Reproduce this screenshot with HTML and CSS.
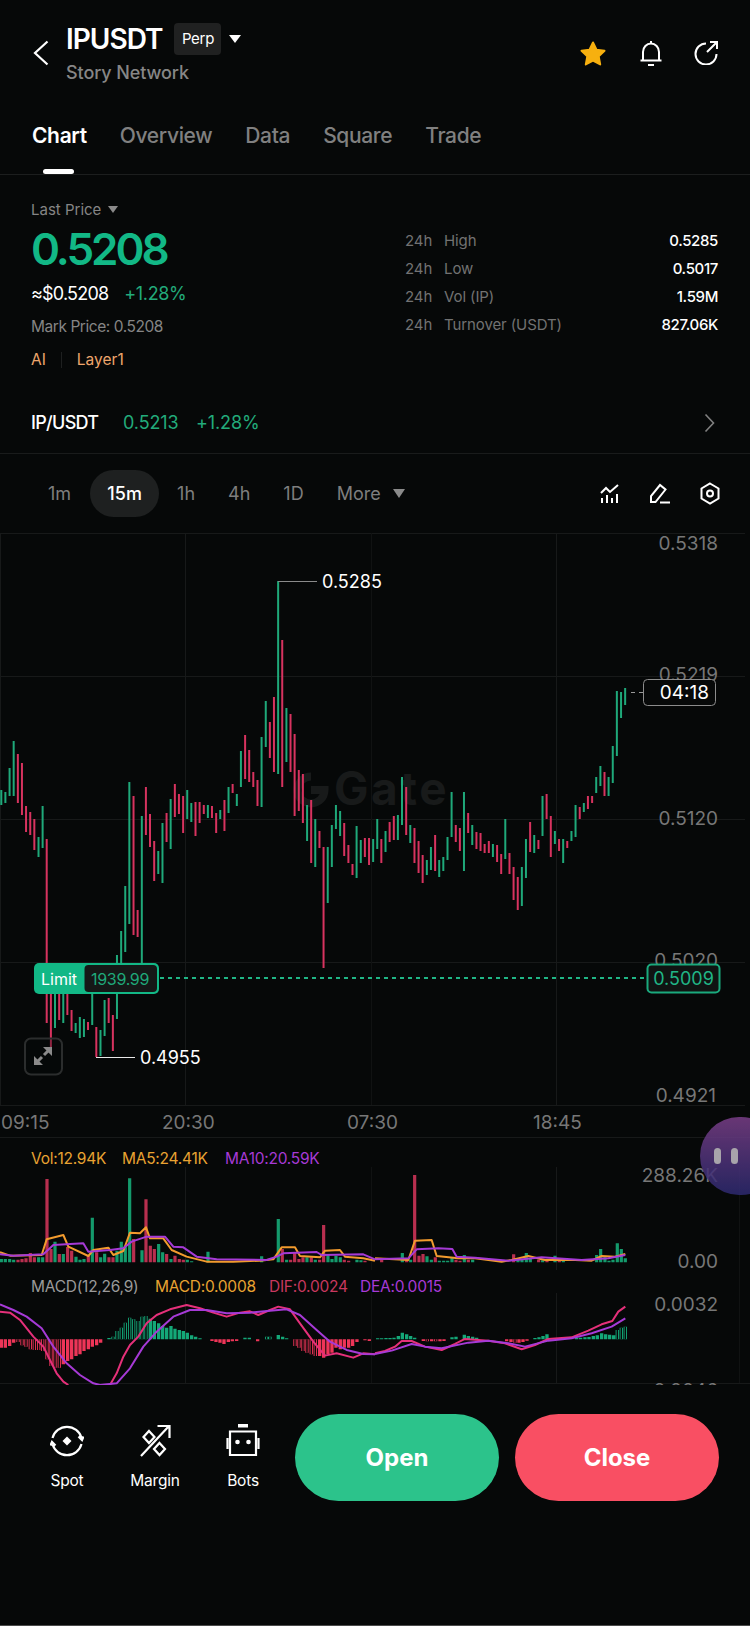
FILE: index.html
```html
<!DOCTYPE html>
<html lang="en">
<head>
<meta charset="utf-8">
<title>IPUSDT Perp</title>
<link rel="stylesheet" href="styles.css">
</head>
<body>
<main class="app">
  <header class="top">
    <svg class="back" width="16" height="26" viewBox="0 0 16 26"><path d="M14.500 1.500 2 13l12.500 11.500"/></svg>
    <div class="title">
      <div class="title-row">
        <span class="symbol">IPUSDT</span>
        <span class="badge">Perp</span>
        <span class="tri tri-white"></span>
      </div>
      <div class="subtitle">Story Network</div>
    </div>
    <div class="top-icons">
      <svg class="star" width="28" height="27" viewBox="0 0 28 27"><path d="M14 2.500 17.500 9.800 25.500 10.800 19.700 16.400 21.200 24.400 14 20.500 6.800 24.400 8.300 16.400 2.500 10.800 10.500 9.800Z"/></svg>
      <svg class="line-icon" width="24" height="27" viewBox="0 0 24 27"><path d="M12 1v3M4 20.500V12a8 8.500 0 0 1 16 0v8.500M1.500 20.500h21M9 25h6"/></svg>
      <svg class="line-icon" width="25" height="25" viewBox="0 0 25 25"><path d="M12 3.500A10.500 10.500 0 1 0 22.500 14M13 12 23 2M16 2h7v7"/></svg>
    </div>
  </header>

  <nav class="tabs">
    <span class="tab tab-on">Chart</span>
    <span class="tab">Overview</span>
    <span class="tab">Data</span>
    <span class="tab">Square</span>
    <span class="tab">Trade</span>
  </nav>

  <section class="stats">
    <div class="price-col">
      <div class="last">Last Price <span class="tri tri-gray"></span></div>
      <div class="price">0.5208</div>
      <div class="fiat"><span>≈$0.5208</span><span class="up">+1.28%</span></div>
      <div class="mark">Mark Price: 0.5208</div>
      <div class="tags"><span>AI</span><i class="tag-sep"></i><span>Layer1</span></div>
    </div>
    <div class="day-col">
      <div class="day-row"><span class="day-24">24h</span><span>High</span><b>0.5285</b></div>
      <div class="day-row"><span class="day-24">24h</span><span>Low</span><b>0.5017</b></div>
      <div class="day-row"><span class="day-24">24h</span><span>Vol (IP)</span><b>1.59M</b></div>
      <div class="day-row"><span class="day-24">24h</span><span>Turnover (USDT)</span><b>827.06K</b></div>
    </div>
  </section>

  <section class="pair">
    <span class="pair-name">IP/USDT</span>
    <span class="pair-val">0.5213</span>
    <span class="pair-val">+1.28%</span>
    <svg class="pair-go" width="11" height="20" viewBox="0 0 11 20"><path d="M1.500 1.500 9.500 10l-8 8.500"/></svg>
  </section>

  <section class="frames">
    <span class="tf">1m</span>
    <span class="tf tf-on">15m</span>
    <span class="tf">1h</span>
    <span class="tf">4h</span>
    <span class="tf">1D</span>
    <span class="tf tf-more">More <span class="tri tri-gray2"></span></span>
    <div class="tools">
      <svg class="tool" width="20" height="20" viewBox="0 0 20 20"><path d="M1 9 6 4l4 4 8-7M2 14v5M7 11v8M12 14v5M17 10v9"/></svg>
      <svg class="tool" width="22" height="21" viewBox="0 0 22 21"><path d="M2 19v-6L11 2l5.500 4.500L6.500 19ZM11 19.500h10"/></svg>
      <svg class="tool" width="20" height="23" viewBox="0 0 20 23"><path d="M10 1.500 18.500 6.500v10L10 21.500 1.500 16.500v-10Z"/><circle cx="10" cy="11.500" r="3"/></svg>
    </div>
  </section>

  <svg class="chart" width="750" height="852" viewBox="0 533 750 852">
    <path class="grid" d="M0 533.500H745M0 676.500H745M0 819.500H745M0 962.500H745M0 1105.500H745M0 1137.500H750M0 1383.500H750M185.500 533V1105M556.500 533V1105M.5 533V1105M185.500 1167V1270M556.500 1167V1270M185.500 1293V1383M556.500 1293V1383"/>
    <path class="grid-dim" d="M371.500 533V1105M371.500 1167V1270M371.500 1293V1383M739.500 1167V1383"/>

    <g class="mark-gate">
      <path class="gate-logo" d="M311 776.500a13.500 13.500 0 1 0 13.500 13.500h-13.500"/>
      <text class="gate-word" x="334" y="805">Gate</text>
    </g>

    <g transform="scale(.998 1)">
      <path class="cg" d="M1.300 790V805M5.400 792V803M9.600 768V796M13.700 741V796M38.600 837V857M42.700 806V848M55.100 990V1028M63.400 990V1023M75.800 1023V1033M80 1017V1038M84.100 1019V1037M92.400 990V1025M100.700 1030V1056M104.800 1000V1036M117.200 955V1019M121.400 931V963M125.500 886V952M129.600 782V924M142.100 816V963M158.600 851V874M162.800 823V883M171 799V849M187.600 790V819M191.700 803V822M208.300 805V818M220.700 810V819M229 787V813M237.300 794V806M241.400 751V787M262.100 737V807M266.300 701V747M278.700 581V774M287 708V762M307.700 805V841M315.900 819V867M328.400 847V903M332.500 825V867M336.600 805V829M340.800 811V836M357.300 826V878M361.500 840V863M373.900 839V862M378 819V849M386.300 831V852M398.700 815V840M402.800 777V825M411.100 825V843M427.700 860V875M431.800 847V870M440.100 860V877M444.200 857V871M448.400 837V860M452.500 792V837M464.900 792V871M473.200 825V845M493.900 844V857M506.300 819V859M522.900 867V906M527 839V878M535.300 835V853M543.600 796V836M556 831V844M564.300 839V863M572.600 831V841M576.700 805V837M585 803V812M597.400 777V793M601.600 766V786M609.800 777V796M614 746V783M618.100 691V756M622.300 692V718M626.400 688V705"/>
      <path class="cr" d="M17.900 754V803M22 763V815M26.100 806V832M30.300 812V835M34.400 819V850M46.800 839V1023M51 990V1047M59.300 990V1020M67.500 990V1015M71.700 1010V1031M88.200 1022V1030M96.500 1027V1057M108.900 998V1023M113.100 1015V1051M133.800 796V935M137.900 910V937M146.200 787V835M150.300 814V847M154.500 841V881M166.900 813V842M175.200 784V817M179.300 794V814M183.500 796V833M195.900 802V836M200 802V823M204.200 805V814M212.400 806V818M216.600 813V833M224.900 800V831M233.100 784V793M245.600 735V779M249.700 750V782M253.800 772V787M258 780V806M270.400 722V758M274.500 697V772M282.800 640V787M291.100 714V772M295.200 734V816M299.400 770V811M303.500 774V823M311.800 800V863M320.100 831V848M324.200 847V968M344.900 823V856M349.100 845V863M353.200 864V875M365.600 838V857M369.800 838V865M382.100 839V863M390.400 822V842M394.600 816V840M407 787V835M415.300 828V863M419.400 841V873M423.500 855V883M436 835V871M456.700 825V842M460.800 828V851M469.100 813V833M477.400 832V849M481.500 833V851M485.600 844V853M489.800 841V853M498.100 845V862M502.200 854V874M510.500 853V874M514.600 867V900M518.800 877V910M531.200 822V852M539.500 840V849M547.700 794V819M551.900 816V857M560.200 839V851M568.400 841V848M580.900 807V819M589.100 796V809M593.300 796V803M605.700 772V796"/>
    </g>

    <path class="hi-line" d="M278 581.500H317"/>
    <text class="extreme" x="322" y="588">0.5285</text>
    <path class="lo-line" d="M96 1057.500H135"/>
    <text class="extreme" x="140" y="1064">0.4955</text>

    <text class="axis" x="718" y="550" text-anchor="end">0.5318</text>
    <text class="axis" x="718" y="681" text-anchor="end">0.5219</text>
    <text class="axis" x="718" y="825" text-anchor="end">0.5120</text>
    <text class="axis" x="718" y="967" text-anchor="end">0.5020</text>
    <text class="axis" x="716" y="1102" text-anchor="end">0.4921</text>

    <path class="dash-white" d="M631 692.500H644"/>
    <rect class="clock-box" x="643.500" y="679.500" width="72" height="26" rx="4"/>
    <text class="clock" x="709" y="699" text-anchor="end">04:18</text>

    <path class="dash-green" d="M160 978H647"/>
    <rect class="limit-box" x="34" y="963" width="125" height="31" rx="5"/>
    <rect class="limit-qty" x="84.500" y="965" width="72.500" height="27" rx="4"/>
    <text class="limit-word" x="41" y="985">Limit</text>
    <text class="limit-num" x="91" y="985">1939.99</text>
    <rect class="order-box" x="647.500" y="964.500" width="72" height="28" rx="4"/>
    <text class="order-num" x="683.500" y="985" text-anchor="middle">0.5009</text>

    <rect class="expand" x="25" y="1038.500" width="37" height="36" rx="6"/>
    <path class="expand-arrow" d="M34 1065v-9l9 9ZM52 1047v9l-9-9Z"/>
    <path class="expand-stem" d="M38 1061l4-4M48 1051l-4 4"/>

    <text class="axis" x="1" y="1129">09:15</text>
    <text class="axis" x="162" y="1129">20:30</text>
    <text class="axis" x="347" y="1129">07:30</text>
    <text class="axis" x="533" y="1129">18:45</text>

    <text class="legend" y="1164"><tspan class="l-or" x="31">Vol:12.94K</tspan><tspan class="l-or" x="122">MA5:24.41K</tspan><tspan class="l-pu" x="225">MA10:20.59K</tspan></text>
    <text class="axis" x="718" y="1182" text-anchor="end">288.26K</text>
    <text class="axis" x="718" y="1268" text-anchor="end">0.00</text>

    <g transform="translate(0 1120) scale(.3333)">
      <path class="vg" d="M4 427v-10M16 427v-10M29 427v-10M41 427v-8M116 427v-15M128 427v-15M165 427v-62M190 427v-25M228 427v-17M240 427v-8M252 427v-10M277 427v-134M302 427v-15M314 427v-26M351 427v-35M364 427v-62M376 427v-50M389 427v-252M426 427v-36M476 427v-55M488 427v-30M513 427v-10M562 427v-8M575 427v-3M624 427v-32M785 427v-18M835 427v-130M860 427v-8M921 427v-15M946 427v-8M984 427v-25M996 427v-10M1008 427v-20M1021 427v-15M1071 427v-8M1083 427v-6"/>
      <path class="vr" d="M54 427v-8M66 427v-10M78 427v-12M91 427v-28M103 427v-15M141 427v-250M153 427v-40M178 427v-25M203 427v-46M215 427v-35M265 427v-20M290 427v-30M327 427v-15M339 427v-15M401 427v-70M438 427v-189M451 427v-50M463 427v-40M500 427v-25M525 427v-20M538 427v-10M550 427v-8M847 427v-40M872 427v-8M884 427v-30M897 427v-10M909 427v-15M934 427v-15M959 427v-8M971 427v-112M1033 427v-8M1046 427v-5M1095 427v-5"/>
      <path class="ma-or" d="M0 397 30 407 125 405 140 358 190 345 205 380 265 408 280 390 325 383 340 405 370 393 390 338 420 340 438 322 450 355 490 355 515 390 560 410 620 425 700 425 780 422 820 418 845 382 885 382 900 408 960 412 975 392 1020 390 1035 410 1090 415 1125 422"/>
      <path class="ma-pu" d="M0 403 40 407 130 403 160 375 250 370 265 395 330 390 370 385 395 365 440 350 495 350 520 380 550 382 590 410 650 418 800 420 830 410 850 400 950 396 965 405 1090 403 1125 418"/>
    </g>
    <g transform="translate(375 1120) scale(.3333)">
      <path class="vg" d="M82 427v-28M107 427v-8M156 427v-18M169 427v-8M193 427v-5M206 427v-5M218 427v-5M231 427v-15M268 427v-22M293 427v-8M429 427v-8M441 427v-8M454 427v-28M466 427v-10M503 427v-6M540 427v-20M565 427v-8M665 427v-22M677 427v-40M690 427v-15M702 427v-5M714 427v-8M727 427v-57M739 427v-40M751 427v-12"/>
      <path class="vr" d="M20 427v-10M95 427v-8M119 427v-262M132 427v-20M144 427v-25M181 427v-15M243 427v-8M255 427v-5M280 427v-8M416 427v-24M491 427v-8M516 427v-5M553 427v-6"/>
      <path class="ma-or" d="M0 415 100 420 120 362 170 360 185 408 250 415 300 415 380 425 410 420 460 408 510 420 600 420 650 422 680 408 720 410 751 402"/>
      <path class="ma-pu" d="M0 418 100 415 125 388 190 385 232 387 245 410 300 413 400 422 500 412 620 420 700 415 751 405"/>
    </g>

    <text class="legend" y="1292"><tspan class="l-gr" x="31">MACD(12,26,9)</tspan><tspan class="l-or" x="155">MACD:0.0008</tspan><tspan class="l-re" x="269">DIF:0.0024</tspan><tspan class="l-pu" x="360">DEA:0.0015</tspan></text>
    <text class="axis" x="718" y="1311" text-anchor="end">0.0032</text>
    <text class="axis" x="718" y="1397" text-anchor="end">-0.0046</text>

    <g transform="translate(0 1120) scale(.3333)">
      <path class="mr" d="M4 658v25M16 658v25M29 658v20M41 658v10M190 658v75M203 658v65M215 658v60M228 658v50M240 658v45M252 658v35M265 658v30M277 658v22M290 658v18M302 658v10M959 658v50M971 658v55M984 658v45M996 658v40"/>
      <path class="mr" d="M54 658v8M66 658v18M78 658v22M91 658v30M103 658v32M116 658v32M128 658v35M141 658v60M153 658v80M165 658v85M178 658v85M885 658v20M897 658v25M909 658v35M921 658v40M934 658v45M946 658v50M1008 658v25M1021 658v30M1033 658v25M1046 658v25M1058 658v20M1071 658v8M1095 658v3M1108 658v5M636 658v5M648 658v8M660 658v10M672 658v14M685 658v8M697 658v6M710 658v5M773 658v6"/>
      <path class="mh" d="M54 658v8M66 658v18M78 658v22M91 658v30M103 658v32M116 658v32M128 658v35M141 658v60M153 658v80M165 658v85M178 658v85M885 658v20M897 658v25M909 658v35M921 658v40M934 658v45M946 658v50"/>
      <path class="mg" d="M451 658v-62M463 658v-55M476 658v-48M488 658v-40M500 658v-35M513 658v-40M525 658v-32M538 658v-28M550 658v-25M562 658v-20M575 658v-12M587 658v-8M600 658v-3M735 658v-5M748 658v-5M835 658v-13M848 658v-8M860 658v-3"/>
      <path class="mg" d="M327 658v-4M339 658v-8M351 658v-25M364 658v-35M376 658v-50M389 658v-65M401 658v-60M414 658v-55M426 658v-68M438 658v-70M800 658v-8M810 658v-8"/>
      <path class="mh" d="M339 658v-8M351 658v-25M364 658v-35M376 658v-50M389 658v-65M401 658v-60M414 658v-55M426 658v-68M438 658v-70M800 658v-8M810 658v-8"/>
      <path class="dif" d="M0 575 30 578 60 600 100 650 130 680 150 720 170 760 190 785 205 795M330 795 350 760 370 710 390 675 415 650 440 610 470 585 510 568 560 555 600 565 640 578 680 590 720 578 750 574 775 585 810 570 835 560 870 568 900 610 940 665 975 707 1010 700 1060 713 1090 700 1125 703"/>
      <path class="dea" d="M0 553 40 570 80 590 125 625 160 680 200 730 240 765 280 790 300 795 350 790 390 745 430 680 470 635 520 590 570 570 620 570 680 580 750 578 810 572 860 568 900 585 950 630 990 665 1040 690 1090 702 1125 703"/>
    </g>
    <g transform="translate(375 1120) scale(.3333)">
      <path class="mg" d="M8 658v-3M20 658v-3M33 658v-4M45 658v-4M57 658v-5M70 658v-10M82 658v-20M95 658v-15M107 658v-10M119 658v-5M231 658v-6M243 658v-8M268 658v-14M280 658v-10M293 658v-8M305 658v-5M480 658v-4M492 658v-6M504 658v-10M516 658v-15M605 658v-4M617 658v-5M630 658v-6M642 658v-7M655 658v-10M667 658v-12M680 658v-18M692 658v-15M704 658v-14M716 658v-12M727 658v-28M739 658v-35M751 658v-38"/>
      <path class="mr" d="M145 658v5M157 658v6M170 658v6M182 658v6M195 658v6M207 658v5M395 658v6M408 658v8M420 658v10M432 658v10M444 658v8M456 658v4"/>
      <path class="mh" d="M727 658v-28M739 658v-35M751 658v-38M157 658v6M182 658v6M420 658v10"/>
      <path class="dif" d="M0 700 30 693 60 680 80 663 110 663 150 680 200 690 240 672 270 657 340 662 390 670 440 688 480 675 520 657 590 652 640 632 680 613 712 603 730 575 751 560"/>
      <path class="dea" d="M0 702 50 692 110 672 150 680 200 685 280 668 340 662 400 670 450 680 520 662 590 655 650 640 710 620 751 595"/>
    </g>
  </svg>

  <div class="blob"><i class="eye"></i><i class="eye"></i></div>

  <footer class="actions">
    <div class="act">
      <svg class="act-icon" width="34" height="36" viewBox="0 0 34 36"><path d="M2.500 15A15 15 0 0 1 31.500 15M31.500 21A15 15 0 0 1 2.500 21M28.500 13.500l3.500 3.500 1.500-3.500M5.500 22.500 2 19 .5 22.500"/><path class="fill" d="m17 13.500 4.500 4.500-4.500 4.500-4.500-4.500Z"/></svg>
      <span>Spot</span>
    </div>
    <div class="act">
      <svg class="act-icon" width="32" height="36" viewBox="0 0 32 36"><path d="M2 33 30 3M18.500 3H30.500V15M10 8l5.500 6-5.500 6-5.500-6ZM20.500 20l5.500 6-5.500 6-5.500-6Z"/></svg>
      <span>Margin</span>
    </div>
    <div class="act">
      <svg class="act-icon" width="34" height="36" viewBox="0 0 34 36"><path d="M4 8.500H30V32H4ZM1.500 15V26M32.500 15V26"/><path class="fill" d="M12 1h10v3.500H12Z"/><circle class="fill" cx="11.500" cy="19" r="2.300"/><circle class="fill" cx="22.500" cy="19" r="2.300"/></svg>
      <span>Bots</span>
    </div>
    <button class="btn btn-open">Open</button>
    <button class="btn btn-close">Close</button>
  </footer>
</main>
</body>
</html>
```

FILE: styles.css
```css
* { box-sizing: border-box; }
html, body { margin: 0; padding: 0; background: #060808; }
body { width: 750px; height: 1626px; overflow: hidden; font-family: Inter, "Liberation Sans", sans-serif; color: #fff; }
.app { position: relative; width: 750px; height: 1626px; display: flex; flex-direction: column; background: #060808; }

.top { height: 110px; display: flex; align-items: flex-start; padding-left: 33px; }
.back { margin-top: 40px; fill: none; stroke: #fff; stroke-width: 2.200; flex: none; }
.title { margin-left: 17px; padding-top: 21px; }
.title-row { display: flex; align-items: center; height: 36px; }
.symbol { font-size: 28px; font-weight: 600; letter-spacing: -1px; line-height: 36px; }
.badge { margin-left: 12px; width: 47px; height: 32px; background: #202121; border-radius: 4px; font-size: 15px; line-height: 32px; text-align: center; letter-spacing: -.3px; }
.tri { display: inline-block; width: 0; height: 0; border-style: solid; border-color: transparent; border-bottom-width: 0; }
.tri-white { margin-left: 8px; border-width: 8px 6px 0; border-top-color: #fff; }
.tri-gray { margin-left: 2px; border-width: 7px 5px 0; border-top-color: #8a8a8a; vertical-align: 2px; }
.tri-gray2 { margin-left: 7px; border-width: 9px 6.500px 0; border-top-color: #8a8a8a; vertical-align: 2px; }
.subtitle { margin-top: 5px; font-size: 18px; line-height: 22px; color: #868686; font-weight: 500; letter-spacing: -.1px; }
.top-icons { margin-left: auto; margin-right: 31px; padding-top: 40px; display: flex; gap: 31px; align-items: flex-start; }
.star { fill: #f7b00f; stroke: #f7b00f; stroke-width: 2; stroke-linejoin: round; margin-right: 1px; }
.line-icon { fill: none; stroke: #fff; stroke-width: 2; }

.tabs { height: 65px; display: flex; gap: 33px; padding: 13px 0 0 32px; border-bottom: 1px solid #1c1e1e; }
.tab { font-size: 21px; font-weight: 500; line-height: 26px; color: #808080; letter-spacing: -.35px; }
.tab-on { color: #fff; font-weight: 600; position: relative; }
.tab-on::after { content: ""; position: absolute; left: 11px; top: 46px; width: 31px; height: 5px; border-radius: 3px; background: #fff; }

.stats { height: 217px; display: flex; }
.price-col { width: 405px; padding: 25px 0 0 31px; }
.last { font-size: 15px; line-height: 20px; color: #858585; }
.price { margin-top: 4px; font-size: 44px; line-height: 50px; font-weight: 600; color: #12b886; letter-spacing: -3px; }
.fiat { margin-top: 8px; display: flex; gap: 16px; font-size: 18px; line-height: 24px; letter-spacing: -.8px; }
.up { color: #22ab7b; letter-spacing: -.35px; }
.mark { margin-top: 11px; font-size: 15.500px; line-height: 20px; color: #858585; letter-spacing: -.45px; }
.tags { margin-top: 13px; display: flex; align-items: center; font-size: 15.500px; line-height: 20px; color: #eea66c; }
.tag-sep { width: 1px; height: 16px; margin: 0 15px; background: #1e2020; }
.day-col { flex: 1; padding: 51px 32px 0 0; }
.day-row { display: flex; height: 28px; align-items: center; font-size: 15px; color: #727272; letter-spacing: -.1px; }
.day-24 { width: 39px; }
.day-row b { margin-left: auto; color: #fff; font-weight: 500; letter-spacing: -.35px; }

.pair { height: 62px; display: flex; align-items: center; padding: 0 35px 0 31px; border-bottom: 1px solid #191b1b; font-size: 18px; }
.pair-name { width: 92px; letter-spacing: -.7px; font-weight: 500; }
.pair-val { color: #22ab7b; width: 73px; letter-spacing: -.1px; }
.pair-go { margin-left: auto; fill: none; stroke: #808080; stroke-width: 1.600; }

.frames { height: 79px; display: flex; align-items: center; gap: 33px; padding: 0 30px 0 48px; font-size: 18px; color: #7e7e7e; }
.tf { line-height: 47px; }
.tf-on { margin: 0 -15px 0 -14px; width: 69px; height: 47px; text-align: center; border-radius: 24px; background: #1e2020; color: #fff; font-weight: 500; }
.tools { margin-left: auto; display: flex; gap: 29px; align-items: center; }
.tool { fill: none; stroke: #fff; stroke-width: 2; }

.chart { display: block; flex: none; font-family: Inter, "Liberation Sans", sans-serif; }
.grid { stroke: #171919; stroke-width: 1; fill: none; }
.grid-dim { stroke: #101212; stroke-width: 1; fill: none; }
.gate-logo { fill: none; stroke: #181a1a; stroke-width: 8; }
.gate-word { fill: #181a1a; font-size: 46px; font-weight: 700; letter-spacing: 2.500px; }
.cg { stroke: #1fa97a; stroke-width: 2; fill: none; }
.cr { stroke: #d7335f; stroke-width: 2; fill: none; }
.hi-line { stroke: #8a8a8a; stroke-width: 1; }
.lo-line { stroke: #e8e8e8; stroke-width: 1; }
.extreme { fill: #fff; font-size: 18px; }
.axis { fill: #777; font-size: 19px; }
.dash-white { stroke: #999; stroke-dasharray: 4 4; stroke-width: 1; }
.clock-box { fill: #070909; stroke: #8c8c8c; stroke-width: 1; }
.clock { fill: #fff; font-size: 19px; }
.dash-green { stroke: #1fb585; stroke-width: 2; stroke-dasharray: 4 4; }
.limit-box { fill: #12b886; }
.limit-qty { fill: #151817; }
.limit-word { fill: #fff; font-size: 16px; }
.limit-num { fill: #1fa97a; font-size: 16px; letter-spacing: -.3px; }
.order-box { fill: #101413; stroke: #1aa97d; stroke-width: 2; }
.order-num { fill: #20b586; font-size: 18px; }
.expand { fill: rgba(6, 8, 8, .35); stroke: #2b2d2d; stroke-width: 2; }
.expand-arrow { fill: #8a8a8a; }
.expand-stem { stroke: #8a8a8a; stroke-width: 3; fill: none; }
.legend { font-size: 15.500px; letter-spacing: -.25px; }
.l-or { fill: #e9a332; }
.l-pu { fill: #a63ad6; }
.l-re { fill: #c8385f; }
.l-gr { fill: #9a9a9a; }
.vg { stroke: #149a6c; stroke-width: 9.600; fill: none; }
.vr { stroke: #b82f4f; stroke-width: 9.600; fill: none; }
.ma-or { stroke: #f29b2e; stroke-width: 6; fill: none; stroke-linejoin: round; }
.ma-pu { stroke: #a63ad6; stroke-width: 6; fill: none; stroke-linejoin: round; }
.mr { stroke: #ee3558; stroke-width: 10; fill: none; }
.mg { stroke: #14a878; stroke-width: 10; fill: none; }
.mh { stroke: #060808; stroke-width: 4.500; fill: none; }
.dif { stroke: #e5307a; stroke-width: 6; fill: none; stroke-linejoin: round; }
.dea { stroke: #a63ad6; stroke-width: 6; fill: none; stroke-linejoin: round; }

.blob { position: absolute; left: 700px; top: 1117px; width: 80px; height: 78px; border-radius: 39px; background: linear-gradient(180deg, #7a3f88, #2d2a70); opacity: .85; display: flex; gap: 10px; padding: 31px 0 0 14px; }
.eye { width: 7px; height: 16px; border-radius: 3.500px; background: #c5c0c8; }

.actions { flex: 1; display: flex; align-items: flex-start; padding: 29px 31px 0 0; border-bottom: 1px solid #4a4a4a; }
.act { width: 88px; display: flex; flex-direction: column; align-items: center; font-size: 15.500px; line-height: 20px; letter-spacing: -.2px; }
.act:first-child { margin-left: 23px; }
.act-icon { display: block; height: 36px; margin: 9px 0 12px; fill: none; stroke: #fff; stroke-width: 2.200; }
.act-icon .fill { fill: #fff; stroke: none; }
.btn { height: 87px; width: 204px; border: 0; border-radius: 43.500px; color: #fff; font-family: Inter, "Liberation Sans", sans-serif; font-size: 24px; font-weight: 700; }
.btn-open { margin-left: 8px; background: #2cc38b; }
.btn-close { margin-left: 16px; background: #f94f63; }
```
